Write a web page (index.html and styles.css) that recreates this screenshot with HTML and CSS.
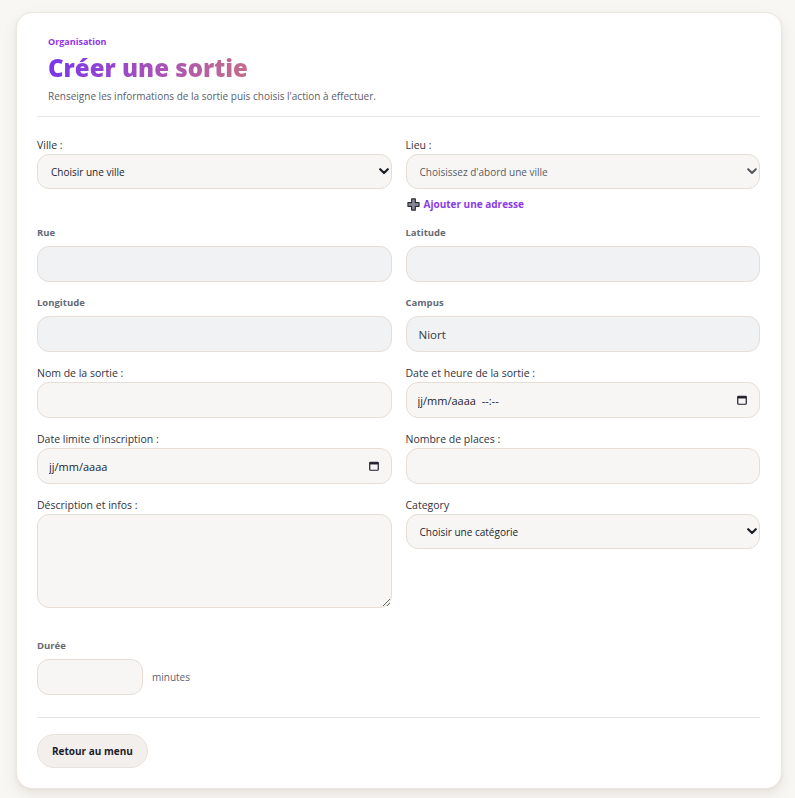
FILE: index.html
```html
<!DOCTYPE html>
<html lang="fr">
<head>
<meta charset="utf-8">
<title>Créer une sortie</title>
<link rel="stylesheet" href="styles.css">
</head>
<body>
<main class="card">
  <header class="card-head">
    <p class="eyebrow">Organisation</p>
    <h1 class="title">Créer une sortie</h1>
    <p class="lead">Renseigne les informations de la sortie puis choisis l'action à effectuer.</p>
  </header>

  <form class="form">
    <div class="grid">
      <div class="field">
        <label class="lbl">Ville :</label>
        <div class="select-wrap">
          <select class="control select"><option>Choisir une ville</option></select>
          <svg class="chev" viewBox="0 0 10 7" width="10" height="7"><path d="M1.2 1.2 5 5 8.8 1.2" fill="none" stroke="#1f1f2b" stroke-width="2.2" stroke-linecap="round" stroke-linejoin="round"/></svg>
        </div>
      </div>
      <div class="field">
        <label class="lbl">Lieu :</label>
        <div class="select-wrap">
          <select class="control select muted"><option>Choisissez d'abord une ville</option></select>
          <svg class="chev" viewBox="0 0 10 7" width="10" height="7"><path d="M1.2 1.2 5 5 8.8 1.2" fill="none" stroke="#55555f" stroke-width="2" stroke-linecap="round" stroke-linejoin="round"/></svg>
        </div>
        <a class="add-link" href="#">
          <svg class="plus" viewBox="0 0 14 14" width="13" height="13"><path d="M5 1h4v4h4v4H9v4H5V9H1V5h4z" fill="#8a8a96" stroke="#2b2b35" stroke-width="1.2" stroke-linejoin="round"/></svg>
          Ajouter une adresse
        </a>
      </div>

      <div class="field">
        <label class="lbl-sm">Rue</label>
        <input class="control ro" type="text" readonly>
      </div>
      <div class="field">
        <label class="lbl-sm">Latitude</label>
        <input class="control ro" type="text" readonly>
      </div>

      <div class="field">
        <label class="lbl-sm">Longitude</label>
        <input class="control ro" type="text" readonly>
      </div>
      <div class="field">
        <label class="lbl-sm">Campus</label>
        <input class="control ro" type="text" value="Niort" readonly>
      </div>

      <div class="field">
        <label class="lbl">Nom de la sortie :</label>
        <input class="control" type="text">
      </div>
      <div class="field">
        <label class="lbl">Date et heure de la sortie :</label>
        <div class="control date">
          <input class="date-text" type="text" placeholder="jj/mm/aaaa  --:--">
          <svg class="cal" viewBox="0 0 10 10" width="10" height="10"><rect x="0.75" y="1.25" width="8.5" height="8" rx="0.8" fill="none" stroke="#1f1f2b" stroke-width="1.2"/><rect x="0.75" y="1.25" width="8.5" height="2.2" fill="#1f1f2b"/></svg>
        </div>
      </div>

      <div class="field">
        <label class="lbl">Date limite d'inscription :</label>
        <div class="control date">
          <input class="date-text" type="text" placeholder="jj/mm/aaaa">
          <svg class="cal" viewBox="0 0 10 10" width="10" height="10"><rect x="0.75" y="1.25" width="8.5" height="8" rx="0.8" fill="none" stroke="#1f1f2b" stroke-width="1.2"/><rect x="0.75" y="1.25" width="8.5" height="2.2" fill="#1f1f2b"/></svg>
        </div>
      </div>
      <div class="field">
        <label class="lbl">Nombre de places :</label>
        <input class="control" type="number">
      </div>

      <div class="field">
        <label class="lbl">Déscription et infos :</label>
        <textarea class="control area"></textarea>
      </div>
      <div class="field">
        <label class="lbl">Category</label>
        <div class="select-wrap">
          <select class="control select"><option>Choisir une catégorie</option></select>
          <svg class="chev" viewBox="0 0 10 7" width="10" height="7"><path d="M1.2 1.2 5 5 8.8 1.2" fill="none" stroke="#1f1f2b" stroke-width="2.2" stroke-linecap="round" stroke-linejoin="round"/></svg>
        </div>
      </div>
    </div>

    <div class="duration">
      <label class="lbl-sm">Durée</label>
      <div class="duration-row">
        <input class="control short" type="number">
        <span class="unit">minutes</span>
      </div>
    </div>

    <div class="actions">
      <button class="btn" type="button">Retour au menu</button>
    </div>
  </form>
</main>
</body>
</html>
```

FILE: styles.css
```css
* { box-sizing: border-box; }

html, body {
  margin: 0;
  background: #f8f7f4;
}

body {
  padding: 12px 13px 11px 16px;
  font-family: "Open Sans", "Noto Sans", sans-serif;
  color: #2e3340;
}

.card {
  width: 766px;
  background: #ffffff;
  border: 1px solid #ece7e1;
  border-radius: 16px;
  box-shadow: 0 6px 14px rgba(120, 100, 80, 0.12), 0 1px 3px rgba(120, 100, 80, 0.08);
  padding: 22px 21px 20px 20px;
}

/* heading block */
.card-head {
  padding: 0 0 12px 11px;
  border-bottom: 1px solid #e8e6e4;
}

.eyebrow {
  margin: 0;
  font-size: 9px;
  line-height: 14px;
  font-weight: 700;
  color: #9135e6;
}

.title {
  margin: 4px 0 0;
  font-size: 24px;
  line-height: 30px;
  font-weight: 800;
  background: linear-gradient(90deg, #7b36ea 0%, #a952b8 55%, #c46d8a 100%);
  -webkit-background-clip: text;
  background-clip: text;
  color: transparent;
  width: max-content;
}

.lead {
  margin: 6px 0 0;
  font-size: 10px;
  line-height: 15px;
  color: #5d5d6c;
}

/* form body */
.form {
  padding-top: 21px;
}

.grid {
  display: grid;
  grid-template-columns: 1fr 1fr;
  column-gap: 14px;
  row-gap: 14px;
}

.field {
  display: flex;
  flex-direction: column;
  min-width: 0;
}

.lbl {
  font-size: 10.5px;
  line-height: 15px;
  color: #2f3340;
  margin-bottom: 1px;
}

.lbl-sm {
  font-size: 9.5px;
  line-height: 14px;
  font-weight: 700;
  color: #646a76;
  margin-bottom: 6px;
}

.control {
  width: 100%;
  height: 36px;
  border: 1px solid #e6ddd5;
  border-radius: 12px;
  background: #f8f6f4;
  font-family: inherit;
  font-size: 11px;
  color: #2a2d38;
  padding: 0 12px;
  outline: none;
}

.control.ro {
  background: #f1f2f4;
  font-size: 11.5px;
  color: #333844;
}

.select-wrap {
  position: relative;
}

.select {
  appearance: none;
  -webkit-appearance: none;
  height: 35px;
  padding: 0 30px 0 13px;
  font-size: 10px;
  color: #22252f;
}

.select.muted {
  color: #575b66;
}

.chev {
  position: absolute;
  right: 3px;
  top: 14px;
  pointer-events: none;
}

.add-link {
  display: flex;
  align-items: center;
  gap: 4px;
  margin-top: 8px;
  font-size: 10px;
  line-height: 15px;
  font-weight: 700;
  color: #8a3bea;
  text-decoration: none;
}

.plus {
  margin-left: 1px;
}

.date {
  display: flex;
  align-items: center;
  padding: 0 12px 0 11px;
}

.date-text {
  flex: 1;
  min-width: 0;
  border: 0;
  background: transparent;
  font-family: inherit;
  font-size: 11px;
  color: #22252f;
  outline: none;
  padding: 0;
  white-space: pre;
}

.date-text::placeholder {
  color: #22252f;
}

.cal {
  flex: none;
}

.area {
  height: 94px;
  resize: vertical;
  padding: 10px 12px;
}

/* duration */
.duration {
  margin-top: 31px;
  display: flex;
  flex-direction: column;
}

.duration-row {
  display: flex;
  align-items: center;
  gap: 9px;
}

.short {
  width: 106px;
}

.unit {
  font-size: 10px;
  color: #5d6270;
}

/* footer actions */
.actions {
  margin-top: 22px;
  padding-top: 16px;
  border-top: 1px solid #e8e6e4;
}

.btn {
  height: 34px;
  padding: 0 14px;
  border: 1px solid #e8e2dc;
  border-radius: 17px;
  background: #f2efec;
  font-family: inherit;
  font-size: 10px;
  font-weight: 700;
  color: #1d1d2b;
  cursor: pointer;
}
```
